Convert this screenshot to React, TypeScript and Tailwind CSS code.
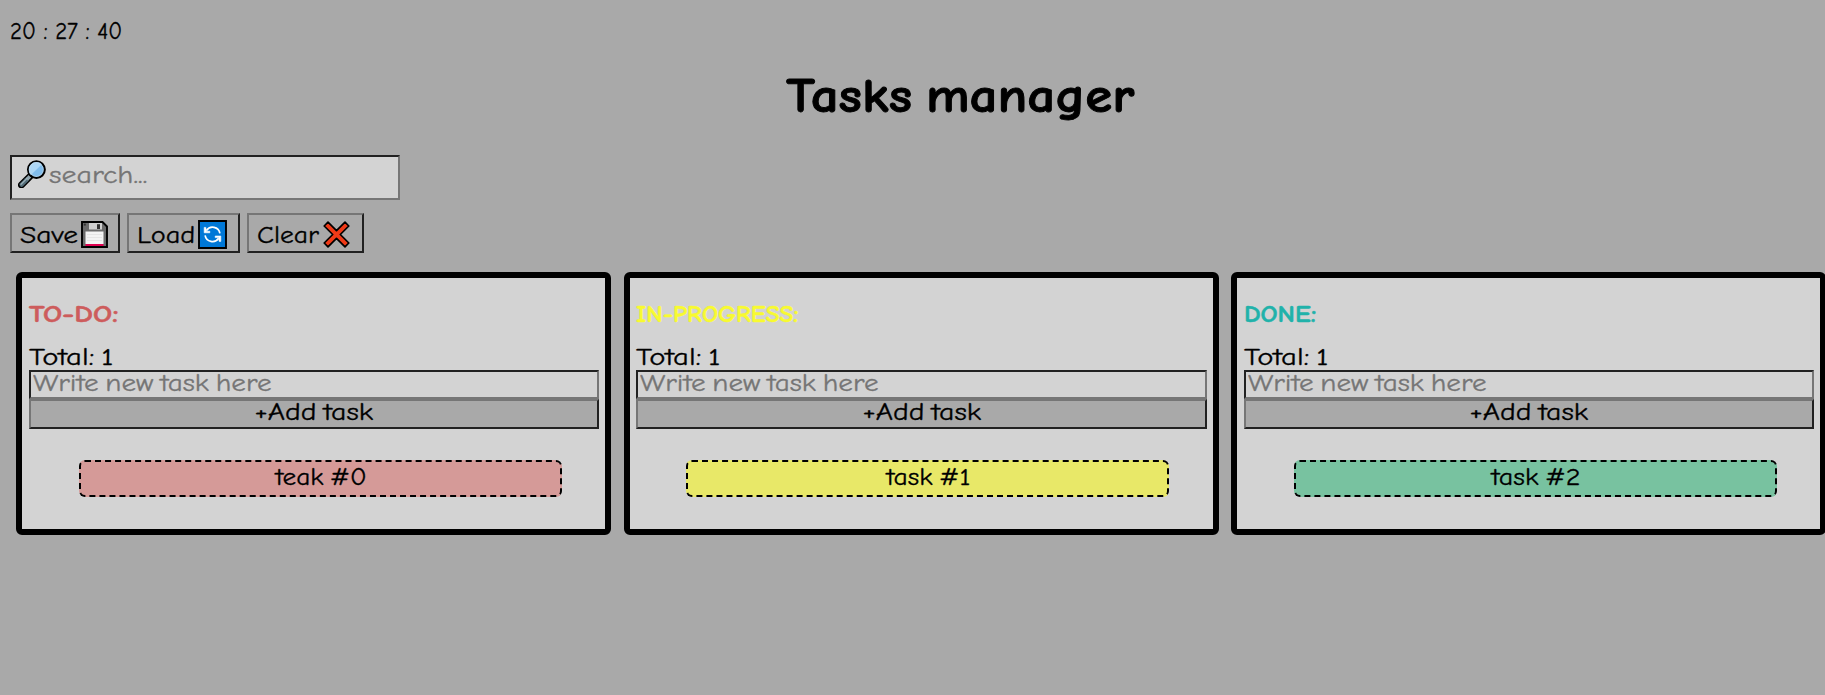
import type { ReactNode } from "react";

function Label({ className, children }: { className: string; children: ReactNode }) {
  return <span className={`inline-block whitespace-pre ${className}`}>{children}</span>;
}

function Magnifier() {
  return (
    <svg className="h-7 w-7 shrink-0" viewBox="0 0 28 28">
      <path d="M3.4 25 12 16.4" stroke="#000" strokeWidth="6.8" strokeLinecap="round" />
      <path d="M3.6 24.8 8.6 19.8" stroke="#546e7a" strokeWidth="4.2" strokeLinecap="round" />
      <path d="M8.8 19.4 12 16.2" stroke="#8fa3ac" strokeWidth="3.6" />
      <path d="M3 24.4 9 18.4" stroke="#9fb4bc" strokeWidth="1.2" strokeLinecap="round" />
      <circle cx="18.4" cy="9.6" r="8.4" fill="#81bdec" stroke="#000" strokeWidth="2.1" />
      <path d="M12.9 15.1A7.5 7.5 0 0 1 23.9 4.3Z" fill="#add7f6" />
      <circle cx="18.4" cy="9.6" r="6.9" fill="none" stroke="#c9dce8" strokeWidth="0.6" />
    </svg>
  );
}

function Floppy() {
  return (
    <svg className="h-[27px] w-[27px] shrink-0" viewBox="0 0 27 27">
      <path d="M1 1H21.5L26 5.5V26H1Z" fill="#6b6b6b" stroke="#000" strokeWidth="1.9" />
      <path d="M8 2H21V8.5H8Z" fill="#cfcfcf" />
      <path d="M16 3.2H19V8H16Z" fill="#333" />
      <path d="M4.5 10.5H22.5V23H4.5Z" fill="#f4f4f4" />
      <path d="M6 13.5H21M6 16.5H21M6 19.5H21" stroke="#e2e2e2" strokeWidth="0.8" />
      <path d="M4.5 23H22.5V25H4.5Z" fill="#e00050" />
      <path d="M2.8 2.6h2v2h-2Z" fill="#333" />
    </svg>
  );
}

function Refresh() {
  return (
    <svg className="h-[29px] w-[29px] shrink-0" viewBox="0 0 29 29">
      <path d="M1 1H28V28H1Z" fill="#0078d7" stroke="#000" strokeWidth="1.9" />
      <g fill="none" stroke="#fff" strokeWidth="1.7">
        <path d="M8.4 10.6A7.4 7.4 0 0 1 21.9 13.4" />
        <path d="M20.6 18.2A7.4 7.4 0 0 1 7.1 15.4" />
      </g>
      <path d="M6.2 7.4V12.8H11.8V11.2H8.4L7.8 7.4Z" fill="#fff" stroke="#fff" strokeWidth="0.6" />
      <path d="M22.8 21.4V16H17.2V17.6H20.6L21.2 21.4Z" fill="#fff" stroke="#fff" strokeWidth="0.6" />
    </svg>
  );
}

function Cross() {
  return (
    <svg className="h-[27px] w-[27px] shrink-0" viewBox="0 0 27 27">
      <path
        d="M5 1.2 13.5 9.7 22 1.2 25.8 5 17.3 13.5 25.8 22 22 25.8 13.5 17.3 5 25.8 1.2 22 9.7 13.5 1.2 5Z"
        fill="#f03a17"
        stroke="#000"
        strokeWidth="1.7"
        strokeLinejoin="round"
      />
    </svg>
  );
}

const outset = "border-2 border-t-[#767676] border-l-[#767676] border-r-[#212121] border-b-[#212121] bg-[#a9a9a9]";
const inset = "border-2 border-t-[#212121] border-l-[#212121] border-r-[#767676] border-b-[#767676] bg-[#d3d3d3]";

function Tool({ width, text, textBox, scale, icon }: { width: string; text: string; textBox: string; scale: string; icon: ReactNode }) {
  return (
    <button className={`flex h-10 items-center pl-2 pt-[3px] ${outset} ${width}`}>
      <span className={`text-left ${textBox}`}>
        <Label className={`origin-left ${scale}`}>{text}</Label>
      </span>
      {icon}
    </button>
  );
}

const columns = [
  { title: "TO-DO:", color: "text-[#cd5c5c]", titleScale: "scale-x-[1.25]", task: "teak #0", taskScale: "scale-x-[1.14]", taskBg: "bg-[#d59a98]" },
  { title: "IN-PROGRESS:", color: "text-[#f8fa30]", titleScale: "scale-x-[1.055]", task: "task #1", taskScale: "scale-x-[1.15]", taskBg: "bg-[#e8e868]" },
  { title: "DONE:", color: "text-[#20b2aa]", titleScale: "scale-x-[1.11]", task: "task #2", taskScale: "scale-x-[1.17]", taskBg: "bg-[#78c2a0]" },
];

export default function App() {
  return (
    <div className="h-[695px] w-full overflow-hidden bg-[#a9a9a9] [font-family:'Comic_Neue','Comic_Sans_MS',cursive] text-[24px] leading-[26px] text-black [-webkit-text-stroke:0.3px]">
      <div className="flex h-[60px] items-center pt-px pl-[10px]">
        <Label className="origin-left scale-x-[0.95]">20 : 27 : 40</Label>
      </div>
      <h1 className="flex h-[71px] w-[1921px] items-center justify-center pt-px text-[49px] leading-[60px] font-bold [word-spacing:-5px] [-webkit-text-stroke:0.9px]">
        <Label className="scale-x-[1.12]">Tasks manager</Label>
      </h1>

      <div className={`mt-6 ml-[10px] flex h-[45px] w-[390px] items-start pl-[6px] pt-[3px] ${inset}`}>
        <Magnifier />
        <input
          className="ml-[3px] mt-px h-7 w-[260px] origin-left scale-x-[1.25] bg-transparent outline-none placeholder:text-[#757575] placeholder:opacity-100"
          placeholder="search..."
        />
      </div>

      <div className="mt-[13px] ml-[10px] flex gap-[7px]">
        <Tool width="w-[110px]" text="Save" textBox="w-[61px]" scale="scale-x-[1.23]" icon={<Floppy />} />
        <Tool width="w-[113px]" text="Load" textBox="w-[61px]" scale="scale-x-[1.18]" icon={<Refresh />} />
        <Tool width="w-[117px]" text="Clear" textBox="w-[66px]" scale="scale-x-[1.15]" icon={<Cross />} />
      </div>

      <div className="mt-[19px] ml-4 flex gap-[12.5px] [word-spacing:-2.5px]">
        {columns.map((c) => (
          <section key={c.title} className="flex h-[263px] w-[595px] shrink-0 flex-col rounded-md border-6 border-black bg-[#d3d3d3] pr-[6px] pl-[6.8px]">
            <h2 className={`mt-[14px] flex h-11 items-center pb-px font-bold [-webkit-text-stroke:0.5px] ${c.color}`}>
              <Label className={`origin-left ${c.titleScale}`}>{c.title}</Label>
            </h2>
            <div className="mt-2 flex h-[26px] items-center">
              <Label className="origin-left scale-x-[1.28]">Total: 1</Label>
            </div>
            <div className={`flex h-[29px] items-start pl-[2px] ${inset}`}>
              <input
                className="-mt-[2px] h-[25px] w-[450px] origin-left scale-x-[1.215] bg-transparent outline-none placeholder:text-[#757575] placeholder:opacity-100 [word-spacing:-2.5px]"
                placeholder="Write new task here"
              />
            </div>
            <button className={`flex h-[30px] items-start justify-center [word-spacing:-2.5px] ${outset}`}>
              <Label className="-mt-[2px] scale-x-[1.24]">+Add task</Label>
            </button>
            <div className={`mt-[31px] ml-[50px] flex h-[37px] w-[483px] items-center justify-center rounded-md border-2 border-dashed border-black pb-[4px] pl-[2px] ${c.taskBg}`}>
              <Label className={c.taskScale}>{c.task}</Label>
            </div>
          </section>
        ))}
      </div>
    </div>
  );
}
